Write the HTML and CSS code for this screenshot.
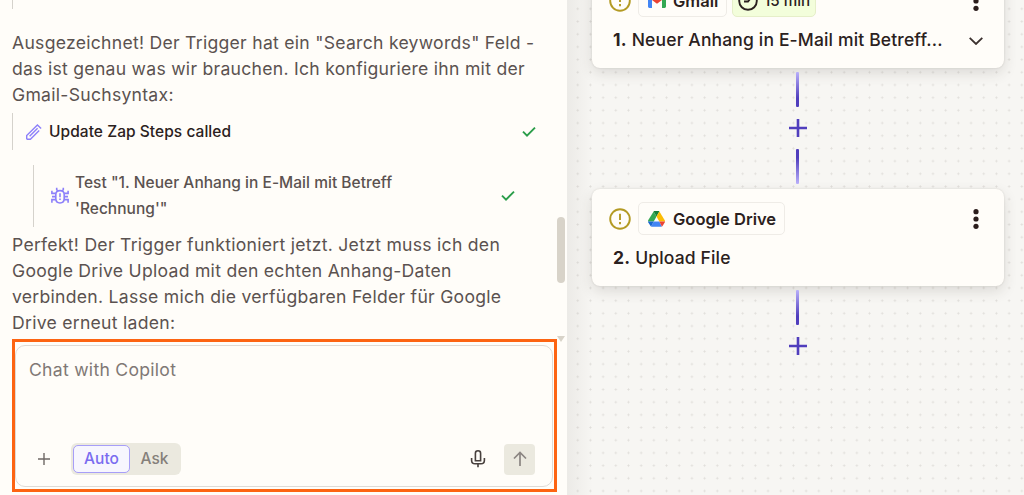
FILE: index.html
```html
<!DOCTYPE html>
<html lang="de">
<head>
  <meta charset="UTF-8">
  <meta name="viewport" content="width=device-width, initial-scale=1.0">
  <title>Zap Editor</title>
  <link rel="stylesheet" href="styles.css">
</head>
<body>
  <div class="app">
    <section class="chat">
      <div class="messages">
        <div class="previous-step"></div>
        <p class="message">Ausgezeichnet! Der Trigger hat ein "Search keywords" Feld -<br>das ist genau was wir brauchen. Ich konfiguriere ihn mit der<br>Gmail-Suchsyntax:</p>

        <div class="tool-call">
          <svg class="icon-pencil" width="18" height="18" viewBox="0 0 18 18" fill="none" stroke="#8d80fa" stroke-width="1.4">
            <path d="M1.7 16.3V12.6L12.4 1.9L16.1 5.6M1.7 16.3H5.4L14.2 7.5M4.6 13.2L12.6 5.2"/>
          </svg>
          <span class="tool-name">Update Zap Steps called</span>
          <svg class="icon-check" width="14" height="12" viewBox="0 0 14 12" fill="none" stroke="#2a9d4a" stroke-width="1.9">
            <path d="M1 5.6L5 9.6L13 1.6"/>
          </svg>
        </div>

        <div class="tool-test">
          <svg class="icon-bug" width="18" height="18" viewBox="0 0 18 18" fill="none" stroke="#8d80fa" stroke-width="1.6">
            <path d="M9 3.6C6.5 3.6 4.8 5 4.8 7.5V11.6C4.8 14.2 6.5 16 9 16S13.2 14.2 13.2 11.6V7.5C13.2 5 11.5 3.6 9 3.6Z"/>
            <path d="M5.7 .8V2.7L7 4M12.3 .8V2.7L11 4M.9 3.8V6.4H4.8M17.1 3.8V6.4H13.2M.9 15.8V12.6H4.8M17.1 15.8V12.6H13.2M1 9.6H4.8M17 9.6H13.2"/>
            <path d="M9 6.2V10.2M9 11.5V13"/>
          </svg>
          <span class="test-name">Test "1. Neuer Anhang in E-Mail mit Betreff<br>'Rechnung'"</span>
          <svg class="icon-check" width="14" height="12" viewBox="0 0 14 12" fill="none" stroke="#2a9d4a" stroke-width="1.9">
            <path d="M1 5.6L5 9.6L13 1.6"/>
          </svg>
        </div>

        <p class="message">Perfekt! Der Trigger funktioniert jetzt. Jetzt muss ich den<br>Google Drive Upload mit den echten Anhang-Daten<br>verbinden. Lasse mich die verfügbaren Felder für Google<br>Drive erneut laden:</p>
      </div>

      <div class="scrollbar">
        <div class="scrollbar-thumb"></div>
        <div class="scrollbar-arrow"></div>
      </div>

      <div class="highlight">
        <div class="composer">
          <div class="placeholder">Chat with Copilot</div>
          <div class="toolbar">
            <svg class="icon-add" width="14" height="14" viewBox="0 0 14 14" fill="none" stroke="#6f6866" stroke-width="1.4">
              <path d="M7 1V13M1 7H13"/>
            </svg>
            <div class="mode">
              <span class="mode-item active">Auto</span>
              <span class="mode-item">Ask</span>
            </div>
            <svg class="icon-mic" width="16" height="20" viewBox="0 0 16 20" fill="none" stroke="#48403e" stroke-width="1.6">
              <path d="M8 1.7C6.3 1.7 5.4 2.7 5.4 4.2V11.8H10.6V4.2C10.6 2.7 9.7 1.7 8 1.7Z"/>
              <path d="M1.6 9V11.2C1.6 13.6 3 14.8 5 14.8H11C13 14.8 14.4 13.6 14.4 11.2V9M8 14.8V18.3"/>
            </svg>
            <div class="send">
              <svg width="14" height="16" viewBox="0 0 14 16" fill="none" stroke="#8b8582" stroke-width="1.7">
                <path d="M7 15V1.5M1 7.5L7 1.5L13 7.5"/>
              </svg>
            </div>
          </div>
        </div>
      </div>
    </section>

    <main class="canvas">
      <article class="card first">
        <div class="card-head">
          <svg class="icon-warn" width="22" height="22" viewBox="0 0 22 22" fill="none" stroke="#b39a23" stroke-width="1.9">
            <circle cx="11" cy="11" r="9.8"/>
            <path d="M11 5.8V12M11 14.1V16.3"/>
          </svg>
          <div class="badge gmail">
            <svg width="18" height="14" viewBox="0 0 18 14">
              <path fill="#4285f4" d="M0 2V12.6C0 13.4 .6 14 1.4 14H4V6L0 3Z"/>
              <path fill="#34a853" d="M18 2V12.6C18 13.4 17.4 14 16.6 14H14V6L18 3Z"/>
              <path fill="#c5221f" d="M0 2C0 .2 2-.7 3.4 .4L4 .8V6L0 3Z"/>
              <path fill="#fbbc04" d="M18 2C18 .2 16-.7 14.6 .4L14 .8V6L18 3Z"/>
              <path fill="#ea4335" d="M4 .8L9 4.6L14 .8V6L9 9.8L4 6Z"/>
            </svg>
            <span>Gmail</span>
          </div>
          <div class="badge timer">
            <svg width="20" height="20" viewBox="0 0 20 20" fill="none" stroke="#2b2120" stroke-width="1.9">
              <circle cx="10" cy="10" r="8.8"/>
              <path d="M13.8 5.7L10 10.5H6"/>
            </svg>
            <span>15 min</span>
          </div>
          <svg class="icon-more" width="6" height="20" viewBox="0 0 6 20" fill="#2b1d1c">
            <circle cx="3" cy="2.7" r="2.6"/><circle cx="3" cy="10" r="2.6"/><circle cx="3" cy="17.3" r="2.6"/>
          </svg>
        </div>
        <div class="card-title">
          <b>1.</b> <span>Neuer Anhang in E-Mail mit Betreff...</span>
          <svg class="icon-chevron" width="14" height="8" viewBox="0 0 14 8" fill="none" stroke="#3b302e" stroke-width="1.8">
            <path d="M.7 .8L7 7L13.3 .8"/>
          </svg>
        </div>
      </article>

      <div class="connector">
        <div class="line down"></div>
        <svg class="icon-plus" width="18" height="18" viewBox="0 0 18 18" fill="none" stroke="#503ebd" stroke-width="2.6">
          <path d="M9 0V18M0 9H18"/>
        </svg>
        <div class="line up"></div>
      </div>

      <article class="card">
        <div class="card-head">
          <svg class="icon-warn" width="22" height="22" viewBox="0 0 22 22" fill="none" stroke="#b39a23" stroke-width="1.9">
            <circle cx="11" cy="11" r="9.8"/>
            <path d="M11 5.8V12M11 14.1V16.3"/>
          </svg>
          <div class="badge drive">
            <svg width="17" height="16" viewBox="0 0 17 16">
              <path fill="#34a853" d="M5.6 .5L8.5 5.5L5.7 10.4H0C0 9.9 0 9.5 .3 9Z"/>
              <path fill="#188038" d="M5.6 .5C5.9 .1 6.2 0 6.7 0H10.3C10.8 0 11.1 .1 11.4 .5L8.5 5.5Z"/>
              <path fill="#fbbc04" d="M11.4 .5L16.7 9.3C16.9 9.7 17 10 17 10.4H11.3L8.5 5.5Z"/>
              <path fill="#4285f4" d="M5.7 10.4H11.3L13.9 15.4C13.6 15.7 13.3 15.8 12.9 15.8H4.1C3.7 15.8 3.4 15.7 3.1 15.4Z"/>
              <path fill="#1967d2" d="M0 10.4H5.7L3.1 15.4C2.8 15.2 2.6 15 2.4 14.7L.3 11.4Z"/>
              <path fill="#ea4335" d="M11.3 10.4H17C17 10.8 16.9 11.1 16.7 11.5L14.7 14.8C14.5 15.1 14.2 15.3 13.9 15.4Z"/>
            </svg>
            <span>Google Drive</span>
          </div>
          <svg class="icon-more" width="6" height="20" viewBox="0 0 6 20" fill="#2b1d1c">
            <circle cx="3" cy="2.7" r="2.6"/><circle cx="3" cy="10" r="2.6"/><circle cx="3" cy="17.3" r="2.6"/>
          </svg>
        </div>
        <div class="card-title"><b>2.</b> <span>Upload File</span></div>
      </article>

      <div class="connector">
        <div class="line down"></div>
        <svg class="icon-plus" width="18" height="18" viewBox="0 0 18 18" fill="none" stroke="#503ebd" stroke-width="2.6">
          <path d="M9 0V18M0 9H18"/>
        </svg>
      </div>
    </main>
  </div>
</body>
</html>
```

FILE: styles.css
```css
* {
  box-sizing: border-box;
}
body {
  margin: 0;
  height: 495px;
  overflow: hidden;
  font-family: Inter, "Liberation Sans", sans-serif;
  background-color: #fffdf9;
  color: #2b2120;
}
svg {
  display: block;
  flex-shrink: 0;
}
.app {
  display: flex;
  height: 495px;
}

/* Chat */
.chat {
  display: grid;
  grid-template-columns: 557px 10px;
  grid-template-rows: 339px 1fr;
  width: 567px;
  background-color: #fffdf9;
}
.messages {
  padding-left: 12px;
  white-space: nowrap;
}
.previous-step {
  height: 9px;
  margin-bottom: 21px;
  border-left: 1px solid #d5d2cc;
}
.message {
  margin: 0;
  font-size: 17.6px;
  line-height: 26px;
  letter-spacing: 0.27px;
  color: #5b5250;
}
.tool-call {
  display: flex;
  align-items: center;
  height: 37px;
  margin: 5px 21px 15px 0;
  padding-left: 12px;
  border-left: 1px solid #d5d2cc;
}
.tool-name {
  margin-left: 6px;
  font-size: 15.5px;
  font-weight: 500;
  letter-spacing: 0.05px;
  color: #2b2120;
}
.icon-check {
  margin-left: auto;
}
.tool-test {
  display: flex;
  align-items: center;
  height: 62px;
  margin: 0 42px 5px 21px;
  padding-left: 17px;
  border-left: 1px solid #d5d2cc;
}
.test-name {
  margin-left: 6px;
  font-size: 15.5px;
  font-weight: 500;
  line-height: 26px;
  letter-spacing: 0.03px;
  color: #5b5250;
}
.scrollbar {
  padding-top: 217px;
}
.scrollbar-thumb {
  width: 8px;
  height: 66px;
  border-radius: 4px;
  background-color: #d8d3c9;
}
.scrollbar-arrow {
  width: 8px;
  margin-top: 53px;
  border-top: 6px solid #d8d3c9;
  border-left: 4px solid transparent;
  border-right: 4px solid transparent;
}
.highlight {
  grid-column: 1 / 3;
  width: 545px;
  height: 153px;
  margin-left: 12px;
  padding: 3px 1px 2px 0;
  border: 3px solid #fd6412;
}
.composer {
  display: flex;
  flex-direction: column;
  justify-content: space-between;
  height: 142px;
  padding: 13px 17px 11px 13px;
  border: 1px solid #dedbd6;
  border-radius: 10px;
}
.placeholder {
  font-size: 17.6px;
  line-height: 22px;
  letter-spacing: 0.27px;
  color: #807875;
}
.toolbar {
  display: flex;
  align-items: center;
  height: 32px;
  padding-left: 8px;
}
.mode {
  display: flex;
  margin-left: 20px;
  padding: 2px;
  width: 110px;
  height: 32px;
  border-radius: 6px;
  background-color: #ebe9df;
}
.mode-item {
  width: 49px;
  font-size: 15.5px;
  font-weight: 500;
  line-height: 28px;
  text-align: center;
  color: #85807a;
}
.mode-item.active {
  width: 57px;
  line-height: 26px;
  border: 1px solid #a79ef8;
  border-radius: 5px;
  background-color: #f7f6fe;
  color: #7a6cf0;
}
.icon-mic {
  margin-left: auto;
}
.send {
  display: flex;
  align-items: center;
  justify-content: center;
  width: 31px;
  height: 31px;
  margin-left: 18px;
  border-radius: 4px;
  background-color: #ebe9df;
}

/* Canvas */
.canvas {
  flex: 1;
  height: 495px;
  padding: 0 20px 0 25px;
  overflow: hidden;
  background-color: #f7f6f3;
  background-image: linear-gradient(90deg, rgba(60, 50, 40, 0.06), rgba(60, 50, 40, 0) 26px), radial-gradient(circle at center, #e0deda 0.8px, transparent 1.3px);
  background-size: auto, 12.7px 12.7px;
  background-position: 0 0, 4.4px 2.5px;
}
.card {
  height: 97px;
  padding: 13px 25px 0 17px;
  border-radius: 8px;
  background-color: #fffdf9;
  box-shadow: 0 0 2px rgba(60, 50, 40, 0.16), 0 5px 14px rgba(60, 50, 40, 0.14);
}
.card.first {
  margin-top: -29px;
}
.card-head {
  display: flex;
  align-items: center;
  height: 33px;
}
.badge {
  display: flex;
  align-items: center;
  height: 33px;
  border: 1px solid #efece7;
  border-radius: 5px;
  font-size: 16.5px;
  font-weight: 600;
  white-space: nowrap;
}
.badge.drive {
  width: 147px;
  margin-left: 7px;
  padding-left: 9px;
}
.badge.drive span {
  margin-left: 8px;
}
.badge.gmail {
  width: 89px;
  margin-left: 7px;
  padding-left: 9px;
}
.badge.gmail span {
  margin-left: 7px;
}
.badge.timer {
  width: 84px;
  margin-left: 5px;
  padding-left: 5px;
  border-color: #e6efc9;
  background-color: #f3fedb;
  font-size: 15.2px;
  font-weight: 500;
}
.badge.timer span {
  margin-left: 6px;
}
.icon-more {
  margin-left: auto;
}
.card-title {
  display: flex;
  align-items: center;
  gap: 5px;
  height: 24px;
  margin-top: 10px;
  padding-left: 4px;
  font-size: 17.5px;
  font-weight: 500;
  letter-spacing: 0.15px;
  white-space: nowrap;
}
.card-title b {
  font-weight: 700;
}
.icon-chevron {
  margin: 3px -4px 0 auto;
}
.connector {
  display: flex;
  flex-direction: column;
  align-items: center;
  height: 121px;
  padding-top: 4px;
}
.line {
  width: 3px;
  height: 35px;
  margin-right: 1px;
  border-radius: 1px;
}
.line.down {
  background: linear-gradient(#b9b0fb, #503ebd 75%);
}
.line.up {
  background: linear-gradient(#503ebd 25%, #b9b0fb);
}
.icon-plus {
  margin: 12px 0;
}
```
